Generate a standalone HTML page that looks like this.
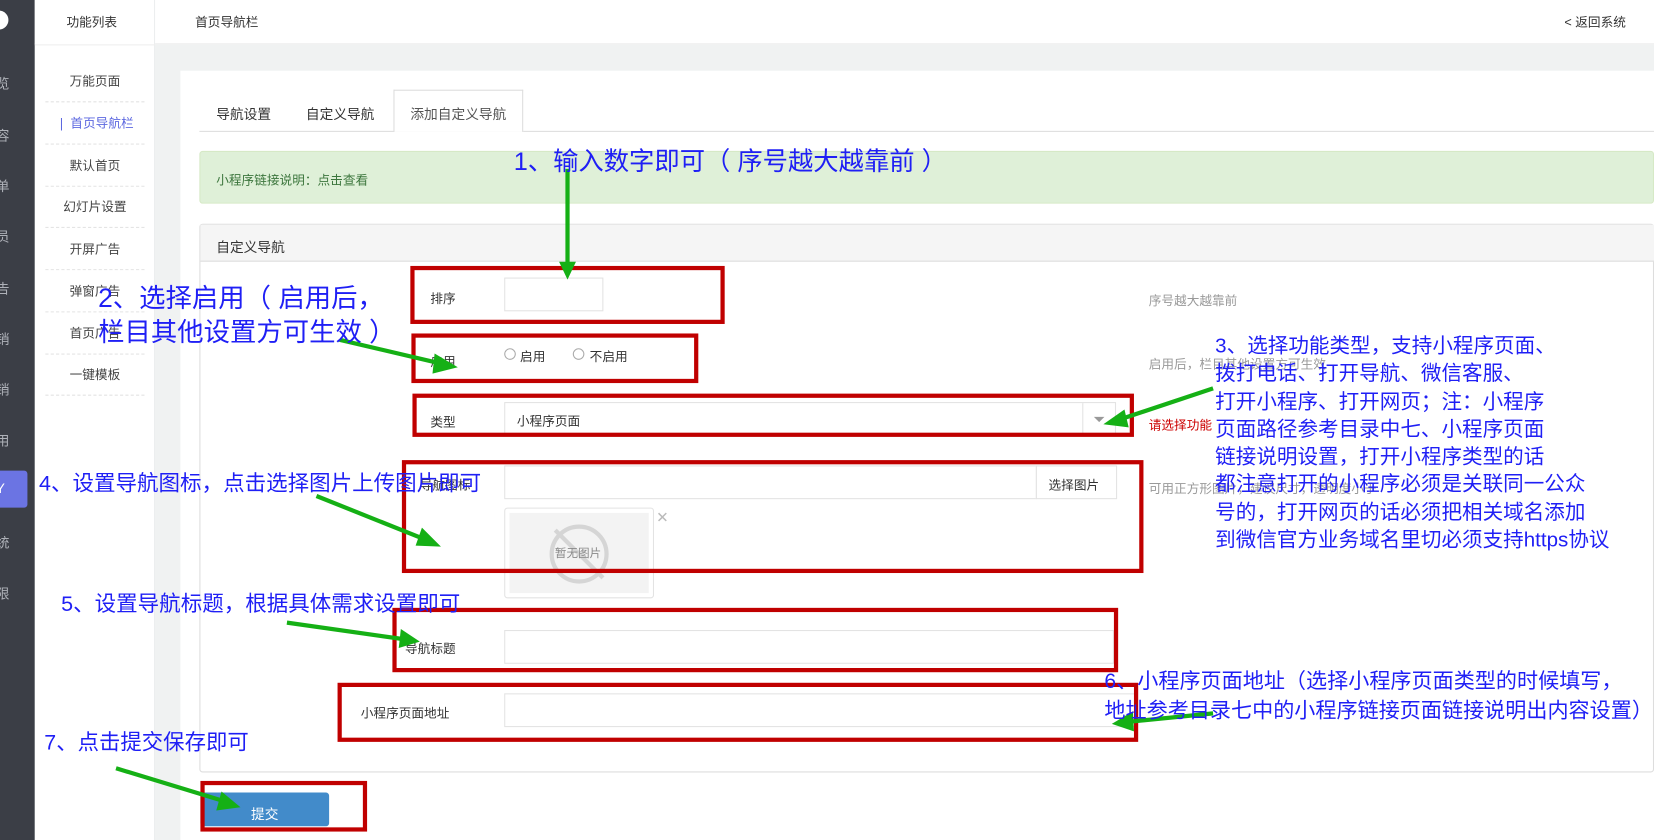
<!DOCTYPE html>
<html><head><meta charset="utf-8"><style>
*{margin:0;padding:0;box-sizing:border-box}
html,body{width:1654px;height:840px;overflow:hidden;background:#fff}
#w{position:absolute;left:0;top:0;width:1568px;height:796px;transform:scale(1.05485,1.0553);transform-origin:0 0;font-family:"Liberation Sans","Noto Sans CJK SC",sans-serif;font-size:12px;color:#333;background:#f0f2f2}
.a{position:absolute}
.t{position:absolute;white-space:nowrap}
.side{left:0;top:0;width:33px;height:796px;background:#3b3e46}
.side .t{color:#aeb1b8;font-size:13px;left:-4px}
.menu{left:33px;top:0;width:114px;height:796px;background:#fff;border-right:1px solid #eceeef}
.mi{position:absolute;left:10px;width:94px;text-align:center;font-size:12px;color:#444;border-bottom:1px dashed #e4e4e4;height:40px;line-height:40px}
.inp{position:absolute;border:1px solid #e3e3e3;background:#fff}
.lab{position:absolute;font-size:12px;color:#333}
.hint{position:absolute;font-size:12px;color:#999;white-space:nowrap}
.rb{position:absolute;border:4px solid #c00000}
.n{position:absolute;color:#1f1ff5;font-size:20px;white-space:nowrap;line-height:26px}
</style></head><body><div id="w">
<div class="a side">
<div class="a" style="left:-10px;top:10px;width:18px;height:18px;border-radius:50%;background:#fff"></div>
<div class="t" style="top:69px">览</div><div class="t" style="top:118px">容</div><div class="t" style="top:166px">单</div><div class="t" style="top:214px">员</div><div class="t" style="top:263px">告</div><div class="t" style="top:311px">销</div><div class="t" style="top:359px">销</div><div class="t" style="top:407px">用</div>
<div class="a" style="left:0;top:446px;width:26px;height:35px;background:#6b74e3;border-radius:0 3px 3px 0"></div><div class="t" style="top:455px;color:#fff">Y</div>
<div class="t" style="top:504px">统</div><div class="t" style="top:552px">限</div>
</div>
<div class="a" style="left:33px;top:0;width:1535px;height:42px;background:#fff;border-bottom:1px solid #eee"></div>
<div class="a menu">
<div class="t" style="left:30px;top:12px;font-size:12px;color:#333">功能列表</div>
<div class="a" style="left:0;top:42px;width:114px;height:1px;background:#eee"></div>
<div class="mi" style="top:57px">万能页面</div>
<div class="mi" style="top:97px;color:#5d68e0">❘ 首页导航栏</div>
<div class="mi" style="top:137px">默认首页</div>
<div class="mi" style="top:176px">幻灯片设置</div>
<div class="mi" style="top:216px">开屏广告</div>
<div class="mi" style="top:256px">弹窗广告</div>
<div class="mi" style="top:296px">首页广告</div>
<div class="mi" style="top:335px">一键模板</div>
</div>
<div class="t" style="left:185px;top:12px;font-size:12px">首页导航栏</div>
<div class="t" style="left:1483px;top:12px;font-size:12px">&lt; 返回系统</div>
<div class="a" style="left:171px;top:67px;width:1397px;height:729px;background:#fff"></div>
<div class="a" style="left:189px;top:124px;width:1379px;height:1px;background:#ddd"></div>
<div class="t" style="left:205px;top:98px;font-size:13px">导航设置</div>
<div class="t" style="left:290px;top:98px;font-size:13px">自定义导航</div>
<div class="a" style="left:373px;top:85px;width:123px;height:40px;background:#fff;border:1px solid #ddd;border-bottom:none"></div>
<div class="t" style="left:389px;top:98px;font-size:13px;color:#555">添加自定义导航</div>
<div class="a" style="left:189px;top:143px;width:1379px;height:50px;background:#dff0d8;border:1px solid #d6e9c6;border-radius:3px"></div>
<div class="t" style="left:205px;top:162px;color:#3c763d">小程序链接说明：点击查看</div>
<div class="a" style="left:189px;top:212px;width:1379px;height:520px;border:1px solid #ddd;border-radius:3px"></div>
<div class="a" style="left:190px;top:213px;width:1378px;height:35px;background:#f5f5f5;border-bottom:1px solid #ddd"></div>
<div class="t" style="left:205px;top:224px;font-size:13px">自定义导航</div>
<div class="lab" style="left:408px;top:274px">排序</div>
<div class="inp" style="left:478px;top:263px;width:94px;height:32px"></div>
<div class="hint" style="left:1089px;top:276px">序号越大越靠前</div>
<div class="lab" style="left:408px;top:334px">启用</div>
<div class="a" style="left:478px;top:330px;width:11px;height:11px;border:1px solid #aaa;border-radius:50%"></div><div class="lab" style="left:493px;top:329px">启用</div>
<div class="a" style="left:543px;top:330px;width:11px;height:11px;border:1px solid #aaa;border-radius:50%"></div><div class="lab" style="left:559px;top:329px">不启用</div>
<div class="hint" style="left:1089px;top:336px">启用后，栏目其他设置方可生效</div>
<div class="lab" style="left:408px;top:391px">类型</div>
<div class="inp" style="left:478px;top:381px;width:580px;height:32px"></div>
<div class="a" style="left:1026px;top:382px;width:1px;height:30px;background:#e3e3e3"></div>
<div class="a" style="left:1037px;top:395px;border:5px solid transparent;border-top:5px solid #999"></div>
<div class="lab" style="left:490px;top:390px">小程序页面</div>
<div class="hint" style="left:1089px;top:394px;color:#c00">请选择功能</div>
<div class="lab" style="left:398px;top:451px">导航图标</div>
<div class="inp" style="left:478px;top:441px;width:505px;height:32px"></div>
<div class="inp" style="left:982px;top:441px;width:77px;height:32px"></div><div class="lab" style="left:994px;top:451px">选择图片</div>
<div class="hint" style="left:1089px;top:454px">可用正方形图片，建议尺寸，透明度小于</div>
<div class="inp" style="left:478px;top:481px;width:142px;height:86px;border-radius:3px"></div>
<div class="a" style="left:483px;top:486px;width:132px;height:76px;background:#f3f3f3"></div>
<div class="a" style="left:521px;top:497px;width:56px;height:56px;border:4px solid #d5d5d5;border-radius:50%"></div>
<div class="a" style="left:547px;top:493px;width:4px;height:64px;background:#d5d5d5;transform:rotate(-45deg)"></div>
<div class="t" style="left:526px;top:516px;font-size:11px;color:#888">暂无图片</div>
<div class="t" style="left:622px;top:482px;color:#bbb;font-size:14px">✕</div>
<div class="lab" style="left:384px;top:606px">导航标题</div>
<div class="inp" style="left:478px;top:597px;width:578px;height:32px"></div>
<div class="lab" style="left:342px;top:667px">小程序页面地址</div>
<div class="inp" style="left:478px;top:657px;width:600px;height:32px"></div>
<div class="a" style="left:190px;top:751px;width:122px;height:32px;background:#428bca;border-radius:3px"></div>
<div class="t" style="left:238px;top:761px;color:#fff;font-size:13px">提交</div>
<div class="rb" style="left:389px;top:252px;width:298px;height:55px"></div>
<div class="rb" style="left:390px;top:316px;width:272px;height:47px"></div>
<div class="rb" style="left:391px;top:373px;width:684px;height:41px"></div>
<div class="rb" style="left:381px;top:436px;width:703px;height:107px"></div>
<div class="rb" style="left:372px;top:576px;width:688px;height:61px"></div>
<div class="rb" style="left:320px;top:647px;width:759px;height:56px"></div>
<div class="rb" style="left:190px;top:740px;width:158px;height:48px"></div>
<svg class="a" style="left:0;top:0" width="1568" height="796">
<g stroke="#15b015" stroke-width="4" fill="#15b015">
<line x1="538" y1="160" x2="538" y2="252"/><polygon points="530,248 546,248 538,265" stroke="none"/>
<line x1="322" y1="322" x2="420" y2="345"/><polygon points="412,335 434,348 410,354" stroke="none"/>
<line x1="1150" y1="368" x2="1060" y2="398"/><polygon points="1066,388 1046,402 1070,405" stroke="none"/>
<line x1="300" y1="470" x2="405" y2="512"/><polygon points="400,500 418,518 394,517" stroke="none"/>
<line x1="272" y1="590" x2="385" y2="606"/><polygon points="380,596 398,608 378,614" stroke="none"/>
<line x1="1150" y1="676" x2="1070" y2="684"/><polygon points="1074,674 1054,686 1075,693" stroke="none"/>
<line x1="110" y1="728" x2="215" y2="760"/><polygon points="210,750 228,765 205,768" stroke="none"/>
</g></svg>
<div class="n" style="left:487px;top:139px;font-size:24px;line-height:30px">1、输入数字即可（ 序号越大越靠前 ）</div>
<div class="n" style="left:93px;top:267px;font-size:25px;line-height:32px">2、选择启用（ 启用后，<br>栏目其他设置方可生效 ）</div>
<div class="n" style="left:1152px;top:315px;font-size:19.5px;line-height:26.3px">3、选择功能类型，支持小程序页面、<br>拨打电话、打开导航、微信客服、<br>打开小程序、打开网页；注：小程序<br>页面路径参考目录中七、小程序页面<br>链接说明设置，打开小程序类型的话<br>都注意打开的小程序必须是关联同一公众<br>号的，打开网页的话必须把相关域名添加<br>到微信官方业务域名里切必须支持https协议</div>
<div class="n" style="left:37px;top:446px;font-size:20.4px">4、设置导航图标，点击选择图片上传图片即可</div>
<div class="n" style="left:58px;top:560px;font-size:20.4px">5、设置导航标题，根据具体需求设置即可</div>
<div class="n" style="left:1047px;top:632px;font-size:20px;line-height:28px">6、小程序页面地址（选择小程序页面类型的时候填写，<br>地址参考目录七中的小程序链接页面链接说明出内容设置）</div>
<div class="n" style="left:42px;top:691px;font-size:20.3px">7、点击提交保存即可</div>
</div></body></html>
